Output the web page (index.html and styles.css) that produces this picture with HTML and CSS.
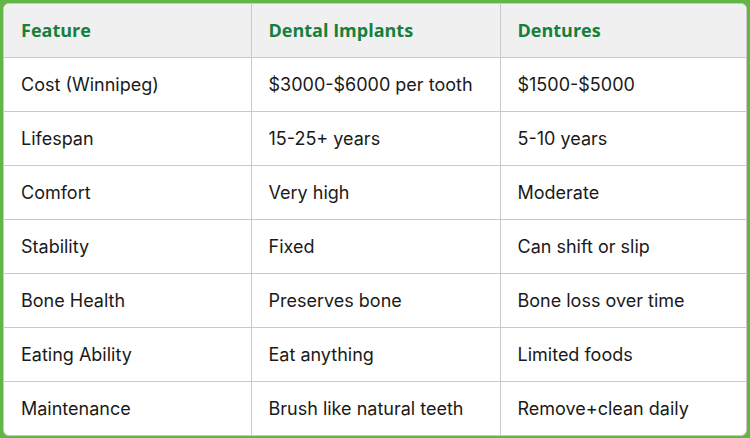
FILE: index.html
```html
<!DOCTYPE html>
<html>
<head>
<meta charset="utf-8">
<link rel="stylesheet" href="styles.css">
</head>
<body>
<div class="frame">
<table class="cmp">
<colgroup><col class="c1"><col class="c2"><col class="c3"></colgroup>
<thead>
<tr><th>Feature</th><th>Dental Implants</th><th>Dentures</th></tr>
</thead>
<tbody>
<tr><td>Cost (Winnipeg)</td><td>$3000-$6000 per tooth</td><td>$1500-$5000</td></tr>
<tr><td>Lifespan</td><td>15-25+ years</td><td>5-10 years</td></tr>
<tr><td>Comfort</td><td>Very high</td><td>Moderate</td></tr>
<tr><td>Stability</td><td>Fixed</td><td>Can shift or slip</td></tr>
<tr><td>Bone Health</td><td>Preserves bone</td><td>Bone loss over time</td></tr>
<tr><td>Eating Ability</td><td>Eat anything</td><td>Limited foods</td></tr>
<tr><td>Maintenance</td><td>Brush like natural teeth</td><td>Remove+clean daily</td></tr>
</tbody>
</table>
</div>
</body>
</html>
```
FILE: styles.css
```css
html, body {
  margin: 0;
  padding: 0;
}
body {
  background: #64b548;
  width: 750px;
  height: 438px;
  overflow: hidden;
}
.frame {
  margin: 3px;
  width: 744px;
  height: 433px;
  background: #fff;
  border: 1px solid #c9c9c9;
  border-radius: 6px;
  box-sizing: border-box;
  overflow: hidden;
}
.cmp {
  width: 100%;
  border-collapse: collapse;
  table-layout: fixed;
  font-family: Inter, "Liberation Sans", sans-serif;
  font-size: 18px;
  color: #1a1a1a;
}
.c1 { width: 247px; }
.c2 { width: 249px; }
.cmp tr {
  height: 54px;
}
.cmp thead tr {
  height: 53px;
}
.cmp th, .cmp td {
  padding: 0 0 0 17px;
  text-align: left;
  vertical-align: middle;
  border-right: 1px solid #c9c9c9;
  border-bottom: 1px solid #c9c9c9;
  white-space: nowrap;
}
.cmp th:last-child, .cmp td:last-child {
  border-right: none;
}
.cmp tr:last-child td {
  border-bottom: none;
}
.cmp th {
  background: #f0f0f0;
  color: #167f3e;
  font-family: "Open Sans", "Liberation Sans", sans-serif;
  font-weight: 700;
  font-size: 18px;
}
.cmp td {
  font-weight: 400;
}
```
